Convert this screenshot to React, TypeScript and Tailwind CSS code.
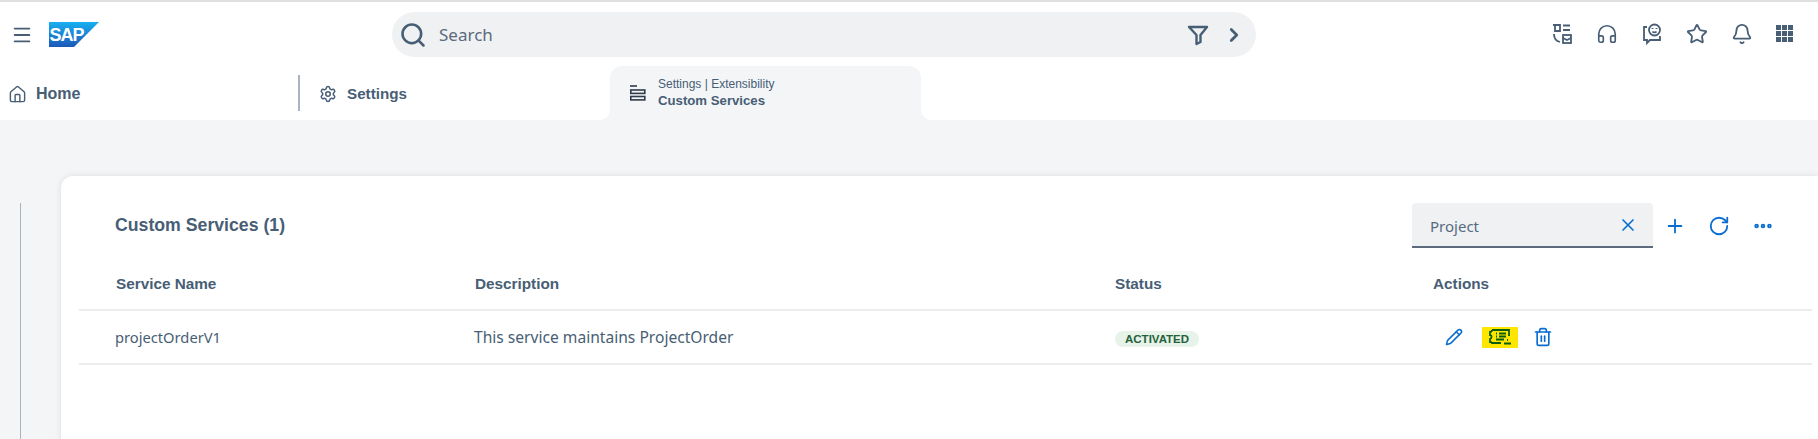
import { Menu, Search, ChevronRight, Home, Settings, Star, Bell, Plus, X, RotateCw, Ellipsis, Headphones, Pencil, Trash2 } from "lucide-react";

const slate = "#475e75";
const blue = "#0a6ed1";
const noto = '"Noto Sans", sans-serif';

function SapLogo() {
  return (
    <svg width="50" height="26" viewBox="0 0 50 26" className="shrink-0">
      <defs>
        <linearGradient id="sapGrad" x1="0" y1="0" x2="0" y2="1">
          <stop offset="0" stopColor="#17b0f0" />
          <stop offset="1" stopColor="#1c58b8" />
        </linearGradient>
      </defs>
      <polygon points="0,0 50,0 25,25 0,25" fill="url(#sapGrad)" />
      <text x="0.5" y="19" fill="#fff" fontSize="18" fontWeight="700" fontFamily="Liberation Sans, sans-serif" letterSpacing="-1">
        SAP
      </text>
    </svg>
  );
}

function FilterIcon() {
  return (
    <svg width="22" height="22" viewBox="0 0 22 22" fill="none" stroke={slate} strokeWidth="2.4" strokeLinejoin="round">
      <path d="M2 3h18l-6.5 8v7l-4 2v-9z" />
    </svg>
  );
}

function InboxIcon() {
  return (
    <svg width="22" height="22" viewBox="0 0 22 22" fill="none" stroke={slate} strokeWidth="1.8">
      <path d="M2 2h7v6H4v-6" />
      <path d="M12 2.500h7M12 7h7M3 11c0 4 2 7 6 8" />
      <rect x="12" y="12" width="8" height="8" />
      <path d="M12 15l4 2 4-2" />
    </svg>
  );
}

function ChatSmileIcon() {
  return (
    <svg width="22" height="22" viewBox="0 0 22 22" fill="none" stroke={slate} strokeWidth="1.8">
      <circle cx="13.5" cy="7" r="5.5" />
      <path d="M11.5 8.500c1 1.200 3 1.200 4 0M6 4H3v13h3v3l3-3h10v-4" />
      <path d="M11.5 5v1M15.500 5v1" />
    </svg>
  );
}

function GridIcon() {
  return (
    <div className="grid grid-cols-3 gap-px">
      {Array.from({ length: 9 }).map((_, i) => (
        <div key={i} className="h-[5px] w-[5px] bg-[#475e75]" />
      ))}
    </div>
  );
}

function TreeIcon() {
  return (
    <svg width="16" height="16" viewBox="0 0 16 16" fill="none" stroke="#2f3c4a" strokeWidth="1.6">
      <path d="M0 1h7" />
      <rect x="0.8" y="5" width="14" height="3.4" />
      <rect x="0.8" y="11.5" width="14" height="3.4" />
    </svg>
  );
}

function TicketIcon() {
  return (
    <svg width="23" height="16" viewBox="0 0 23 16" fill="none" stroke="#0b5d10" strokeWidth="1.8">
      <path d="M3 1h17v6" />
      <path d="M3 1c0 1.500 -1 2 -2 2v3c2 0 2 3 0 4v3c1 0 2 0 2 1h9" />
      <path d="M7 4.500h1M10 4.500h7M7 7.500h1M10 7.500h7M7 10.500h8M18 11h1M15 14.500h7" />
    </svg>
  );
}

export default function App() {
  return (
    <div
      className="flex h-[439px] w-[1818px] flex-col overflow-hidden bg-[#f3f5f7] text-[#475e75]"
      style={{ fontFamily: '"Liberation Sans", Arial, sans-serif' }}
    >
      {/* top bar */}
      <div className="h-[2px] bg-[#dfdfdf]" />
      <div className="flex h-[64px] items-center bg-white pt-[1px]">
        <Menu size={22} strokeWidth={2} color={slate} className="ml-[11px]" />
        <div className="ml-[16px] flex">
          <SapLogo />
        </div>
        <div className="ml-[293px] flex h-[45px] w-[864px] items-center rounded-full bg-[#eff1f3] pl-[7px] pr-[11px]">
          <Search size={28} strokeWidth={2.2} color={slate} />
          <span className="ml-[12px] flex-1 text-[17px] text-[#5b6b7b]" style={{ fontFamily: noto }}>
            Search
          </span>
          <FilterIcon />
          <ChevronRight size={22} strokeWidth={3} color={slate} className="ml-[14px]" />
        </div>
        <div className="ml-[295px] mt-[-2px] flex items-center gap-[23px]">
          <InboxIcon />
          <Headphones size={22} strokeWidth={1.8} color={slate} />
          <ChatSmileIcon />
          <Star size={22} strokeWidth={2} color={slate} />
          <Bell size={22} strokeWidth={2} color={slate} />
          <GridIcon />
        </div>
      </div>

      {/* tabs */}
      <div className="flex h-[54px] items-stretch bg-white">
        <div className="flex w-[298px] items-center gap-[9px] pl-[8px] pt-[2px]">
          <Home size={19} strokeWidth={1.8} color={slate} />
          <span className="text-[16px] font-bold">Home</span>
        </div>
        <div className="my-[9px] flex w-[312px] items-center gap-[10px] border-l-2 border-[#a9b4c0] pl-[19px] pt-[2px]">
          <Settings size={18} strokeWidth={2} color={slate} />
          <span className="text-[15.2px] font-bold">Settings</span>
        </div>
        <div className="relative flex w-[311px] items-center gap-[12px] rounded-t-[12px] bg-[#f3f5f7] pl-[20px]">
          <TreeIcon />
          <div className="flex flex-col">
            <span className="text-[12px] leading-[16px]">Settings | Extensibility</span>
            <span className="text-[13.2px] font-bold leading-[18px]">Custom Services</span>
          </div>
          {/* flared tab corners */}
          <div className="absolute bottom-0 left-[-10px] h-[10px] w-[10px] bg-[#f3f5f7]">
            <div className="h-full w-full rounded-br-[10px] bg-white" />
          </div>
          <div className="absolute bottom-0 right-[-10px] h-[10px] w-[10px] bg-[#f3f5f7]">
            <div className="h-full w-full rounded-bl-[10px] bg-white" />
          </div>
        </div>
      </div>

      {/* body */}
      <div className="flex flex-1 pl-[20px] pt-[56px]">
        <div className="mt-[27px] w-px bg-[#a9b4c0]" />
        <div className="mb-[-20px] ml-[40px] flex-1 rounded-tl-[12px] bg-white pl-[18px] pt-[27px] shadow-[0_0_6px_rgba(0,0,0,0.1)]">
          <div className="flex h-[45px] items-center">
            <span className="ml-[36px] flex-1 text-[17.7px] font-bold">Custom Services (1)</span>
            <div className="flex h-[45px] w-[241px] items-center justify-between rounded-t-[4px] border-b-2 border-[#5b6b7b] bg-[#eff1f3] pl-[18px] pr-[15px]">
              <span className="pt-[3px] text-[15px] text-[#556b82]" style={{ fontFamily: noto }}>Project</span>
              <X size={20} strokeWidth={2} color={blue} />
            </div>
            <Plus size={22} strokeWidth={2} color={blue} className="ml-[11px]" />
            <RotateCw size={22} strokeWidth={2} color={blue} className="ml-[22px]" />
            <Ellipsis size={22} strokeWidth={3} color={blue} className="ml-[22px] mr-[44px]" />
          </div>

          <div className="mr-[6px] grid h-[63px] grid-cols-[359px_640px_318px_1fr] items-center border-b-2 border-[#eaecee] pl-[37px] pt-[12px] text-[15.3px] font-bold">
            <span>Service Name</span>
            <span>Description</span>
            <span>Status</span>
            <span>Actions</span>
          </div>

          <div className="mr-[6px] grid h-[54px] grid-cols-[359px_640px_318px_1fr] items-center border-b-2 border-[#eaecee] pl-[37px] text-[14.7px]" style={{ fontFamily: noto }}>
            <span className="ml-[-1px]">projectOrderV1</span>
            <span className="ml-[-1px] pt-[2px] text-[15.6px]">This service maintains ProjectOrder</span>
            <span>
              <span className="rounded-full bg-[#e7f3e8] px-[10px] py-[2px] text-[11.5px] font-bold text-[#25613a]" style={{ fontFamily: '"Liberation Sans", sans-serif' }}>ACTIVATED</span>
            </span>
            <div className="flex items-center pl-[12px]">
              <Pencil size={18} strokeWidth={2} color={blue} />
              <div className="ml-[19px] flex h-[21px] w-[36px] items-center justify-center bg-[#ffe600]">
                <TicketIcon />
              </div>
              <Trash2 size={20} strokeWidth={2} color={blue} className="ml-[15px]" />
            </div>
          </div>
        </div>
      </div>
    </div>
  );
}
